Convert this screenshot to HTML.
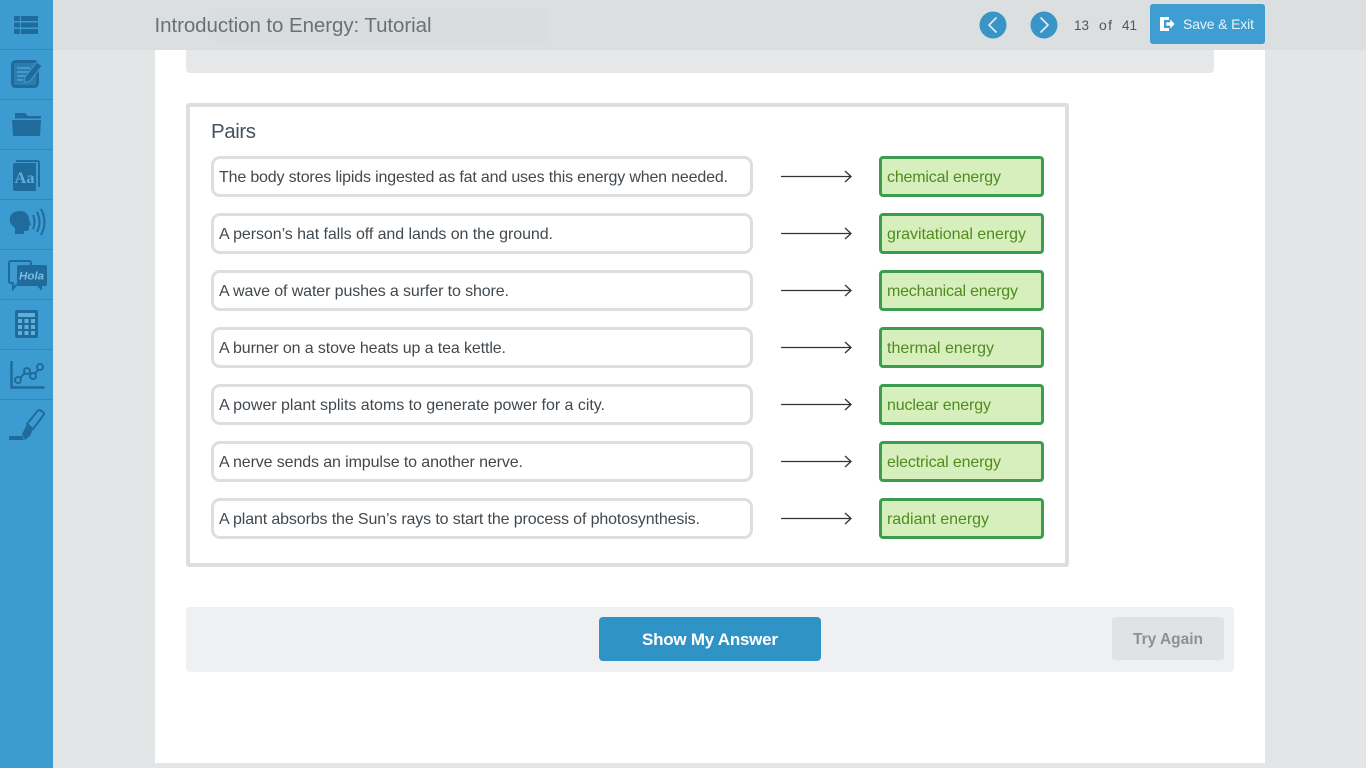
<!DOCTYPE html>
<html><head><meta charset="utf-8"><title>Introduction to Energy: Tutorial</title>
<style>
html,body{margin:0;padding:0;width:1366px;height:768px;overflow:hidden;background:#e3e6e7;font-family:"Liberation Sans",sans-serif}
.a{position:absolute;box-sizing:border-box}
svg{position:absolute;left:0;top:0}
text{font-family:"Liberation Sans",sans-serif}
</style></head><body>
<div class="a" style="left:155px;top:0;width:1110px;height:763px;background:#fff"></div>
<div class="a" style="left:186px;top:40px;width:1028px;height:33px;background:#e6e7e8;border-radius:0 0 4px 4px"></div>
<div class="a" style="left:0;top:0;width:1366px;height:50px;background:#dcdfe0"></div>
<div class="a" style="left:215px;top:8px;width:333px;height:34px;background:#dadddE"></div>
<div class="a" style="left:0;top:0;width:53px;height:768px;background:#3c9bd0"></div>
<div class="a" style="left:186px;top:103px;width:883px;height:464px;border:4px solid #dedede;border-radius:3px;background:#fff"></div>

<div class="a" style="left:211px;top:156px;width:542px;height:41px;border:3px solid #dedede;border-radius:9px;background:#fff"></div>
<div class="a" style="left:211px;top:213px;width:542px;height:41px;border:3px solid #dedede;border-radius:9px;background:#fff"></div>
<div class="a" style="left:211px;top:270px;width:542px;height:41px;border:3px solid #dedede;border-radius:9px;background:#fff"></div>
<div class="a" style="left:211px;top:327px;width:542px;height:41px;border:3px solid #dedede;border-radius:9px;background:#fff"></div>
<div class="a" style="left:211px;top:384px;width:542px;height:41px;border:3px solid #dedede;border-radius:9px;background:#fff"></div>
<div class="a" style="left:211px;top:441px;width:542px;height:41px;border:3px solid #dedede;border-radius:9px;background:#fff"></div>
<div class="a" style="left:211px;top:498px;width:542px;height:41px;border:3px solid #dedede;border-radius:9px;background:#fff"></div>

<div class="a" style="left:879px;top:156px;width:165px;height:41px;border:3px solid #3d9c4f;border-radius:4px;background:#d7eebd"></div>
<div class="a" style="left:879px;top:213px;width:165px;height:41px;border:3px solid #3d9c4f;border-radius:4px;background:#d7eebd"></div>
<div class="a" style="left:879px;top:270px;width:165px;height:41px;border:3px solid #3d9c4f;border-radius:4px;background:#d7eebd"></div>
<div class="a" style="left:879px;top:327px;width:165px;height:41px;border:3px solid #3d9c4f;border-radius:4px;background:#d7eebd"></div>
<div class="a" style="left:879px;top:384px;width:165px;height:41px;border:3px solid #3d9c4f;border-radius:4px;background:#d7eebd"></div>
<div class="a" style="left:879px;top:441px;width:165px;height:41px;border:3px solid #3d9c4f;border-radius:4px;background:#d7eebd"></div>
<div class="a" style="left:879px;top:498px;width:165px;height:41px;border:3px solid #3d9c4f;border-radius:4px;background:#d7eebd"></div>

<div class="a" style="left:186px;top:607px;width:1048px;height:65px;background:#eff0f2;border-radius:4px"></div>
<div class="a" style="left:599px;top:617px;width:222px;height:44px;background:#2f93c6;border-radius:4px"></div>
<div class="a" style="left:1112px;top:617px;width:112px;height:43px;background:#e1e2e4;border-radius:3px"></div>
<div class="a" style="left:1150px;top:4px;width:115px;height:40px;background:#3f9ed1;border-radius:3px"></div>

<svg width="1366" height="768" viewBox="0 0 1366 768">
<!-- sidebar separators -->
<g fill="#3288ba">
<rect x="0" y="49" width="53" height="1"/><rect x="0" y="99" width="53" height="1"/><rect x="0" y="149" width="53" height="1"/><rect x="0" y="199" width="53" height="1"/><rect x="0" y="249" width="53" height="1"/><rect x="0" y="299" width="53" height="1"/><rect x="0" y="349" width="53" height="1"/><rect x="0" y="399" width="53" height="1"/>
</g>
<g fill="#1f6c9c" stroke="none">
<!-- list -->
<rect x="14" y="16" width="6" height="5"/><rect x="21" y="16" width="17" height="5"/>
<rect x="14" y="22.500" width="6" height="5"/><rect x="21" y="22.500" width="17" height="5"/>
<rect x="14" y="29" width="6" height="5"/><rect x="21" y="29" width="17" height="5"/>
<!-- notes -->
<rect x="12.500" y="61.500" width="25" height="25" rx="3" fill="#2a7dad" stroke="#1f6c9c" stroke-width="3"/>
<path d="M17 68h13M17 72h11M17 76h8M17 80h6" stroke="#4ba3d4" stroke-width="1.500" fill="none"/>
<path d="M37 62l5 4-12 15-6 2 1-6z" fill="#1f6c9c" stroke="#3c9bd0" stroke-width="1"/>
<!-- folder -->
<path d="M15 113h10l3 3h13v2.500H15z"/><path d="M12 120h29l-1 16H13z"/>
<!-- book -->
<path d="M16 160h21q3 0 3 3v24h-2V162H16z"/><path d="M15 163h21v28H15q-2 0-2-2V165q0-2 2-2z"/>
<text x="14.500" y="183" font-size="16" font-weight="700" fill="#5eaed9" style="font-family:'Liberation Serif',serif" textLength="20" lengthAdjust="spacingAndGlyphs">Aa</text>
<!-- speaking head -->
<path d="M20 211c6 0 9 4 9 9l2 5-2 1v3q0 2-3 2h-2v3h-9v-6c-4-3-6-6-5-10 0-4 4-7 10-7z"/>
</g>
<g fill="none" stroke="#1f6c9c">
<path d="M33 215q3 7 0 14" stroke-width="2"/><path d="M37 212q5 10 0 20" stroke-width="2"/><path d="M41 209q7 13 0 26" stroke-width="2"/>
<!-- hola outline bubble -->
<path d="M31 266v-3q0-2-2-2H11q-2 0-2 2v18q0 2 2 2h2v6l4-5" stroke-width="2"/>
<!-- graph -->
<path d="M11.500 361v26.500h33" stroke-width="2.500"/>
<circle cx="18" cy="380" r="3" stroke-width="2"/><circle cx="27" cy="371" r="3" stroke-width="2"/><circle cx="33" cy="376" r="3" stroke-width="2"/><circle cx="40" cy="367" r="3" stroke-width="2"/>
<path d="M20 378l5-5M29 373l2 1.500M35 373.500l3.500-4" stroke-width="2"/>
<!-- highlighter outline -->
<path d="M27 424l11-13.500q1-1 2-.5l3.500 2.500q1 1 0 2.500L33 429z" stroke-width="2"/>
</g>
<g fill="#1f6c9c">
<path d="M19 265h26q2 0 2 2v17q0 2-2 2h-3v5l-5-5H19q-2 0-2-2v-17q0-2 2-2z"/>
<text x="19" y="279.500" font-size="11" font-weight="700" font-style="italic" fill="#7cbde0" textLength="25" lengthAdjust="spacingAndGlyphs">Hola</text>
<!-- calculator -->
<path d="M17 310h19q2 0 2 2v24q0 2-2 2H17q-2 0-2-2v-24q0-2 2-2z"/>
<rect x="18" y="313" width="17" height="4" fill="#5eaed9"/>
<g fill="#5eaed9">
<rect x="18" y="319" width="4" height="4"/><rect x="24.500" y="319" width="4" height="4"/><rect x="31" y="319" width="4" height="4"/>
<rect x="18" y="325" width="4" height="4"/><rect x="24.500" y="325" width="4" height="4"/><rect x="31" y="325" width="4" height="4"/>
<rect x="18" y="331" width="4" height="4"/><rect x="24.500" y="331" width="4" height="4"/><rect x="31" y="331" width="4" height="4"/>
</g>
<!-- highlighter -->
<path d="M27 424l6 5-3 7-5 4-3-5 2-5z"/>
<path d="M9 436h13l2 4H9z"/>
</g>

<!-- header -->
<text x="154.500" y="32" font-size="20.500" fill="#687277" textLength="277">Introduction to Energy: Tutorial</text>
<circle cx="993" cy="25" r="13.500" fill="#3a95c7"/><circle cx="1044" cy="25" r="13.500" fill="#3a95c7"/>
<path d="M996.500 17.500L989 25l7.500 7.500" fill="none" stroke="#dff0f9" stroke-width="1.600"/>
<path d="M1040.500 17.500L1048 25l-7.500 7.500" fill="none" stroke="#dff0f9" stroke-width="1.600"/>
<text x="1074" y="30" font-size="13.500" fill="#555" textLength="15">13</text>
<text x="1099" y="30" font-size="14" fill="#555" textLength="13">of</text>
<text x="1122" y="30" font-size="13.500" fill="#555" textLength="15">41</text>
<path d="M1160 17h9v3h-5v8h5v3h-9z" fill="#fff"/><path d="M1166 22h4v-3.500l5 5.500-5 5.500V26h-4z" fill="#fff" stroke="#3f9ed1" stroke-width=".6"/>
<text x="1183" y="29" font-size="14" fill="#e8f3fa" textLength="71">Save &amp; Exit</text>

<text x="211" y="138" font-size="20.500" fill="#44525c" textLength="45">Pairs</text>

<g font-size="16" fill="#41494f">
<text x="219" y="182" textLength="509">The body stores lipids ingested as fat and uses this energy when needed.</text>
<text x="219" y="239" textLength="334">A person’s hat falls off and lands on the ground.</text>
<text x="219" y="296" textLength="290">A wave of water pushes a surfer to shore.</text>
<text x="219" y="353" textLength="287">A burner on a stove heats up a tea kettle.</text>
<text x="219" y="410" textLength="386">A power plant splits atoms to generate power for a city.</text>
<text x="219" y="467" textLength="304">A nerve sends an impulse to another nerve.</text>
<text x="219" y="524" textLength="481">A plant absorbs the Sun’s rays to start the process of photosynthesis.</text>
</g>
<g font-size="16" fill="#4f8c1f">
<text x="887" y="182" textLength="114">chemical energy</text>
<text x="887" y="239" textLength="139">gravitational energy</text>
<text x="887" y="296" textLength="131">mechanical energy</text>
<text x="887" y="353" textLength="107">thermal energy</text>
<text x="887" y="410" textLength="104">nuclear energy</text>
<text x="887" y="467" textLength="114">electrical energy</text>
<text x="887" y="524" textLength="102">radiant energy</text>
</g>
<g fill="none" stroke="#333" stroke-width="1.300">
<path d="M781 176.500h70M845 171l6 5.500-6 5.500"/>
<path d="M781 233.500h70M845 228l6 5.500-6 5.500"/>
<path d="M781 290.500h70M845 285l6 5.500-6 5.500"/>
<path d="M781 347.500h70M845 342l6 5.500-6 5.500"/>
<path d="M781 404.500h70M845 399l6 5.500-6 5.500"/>
<path d="M781 461.500h70M845 456l6 5.500-6 5.500"/>
<path d="M781 518.500h70M845 513l6 5.500-6 5.500"/>
</g>
<text x="642" y="645" font-size="17" font-weight="700" fill="#fff" textLength="136">Show My Answer</text>
<text x="1133" y="644" font-size="15.500" font-weight="700" fill="#8e9094" textLength="70">Try Again</text>
</svg>
</body></html>
